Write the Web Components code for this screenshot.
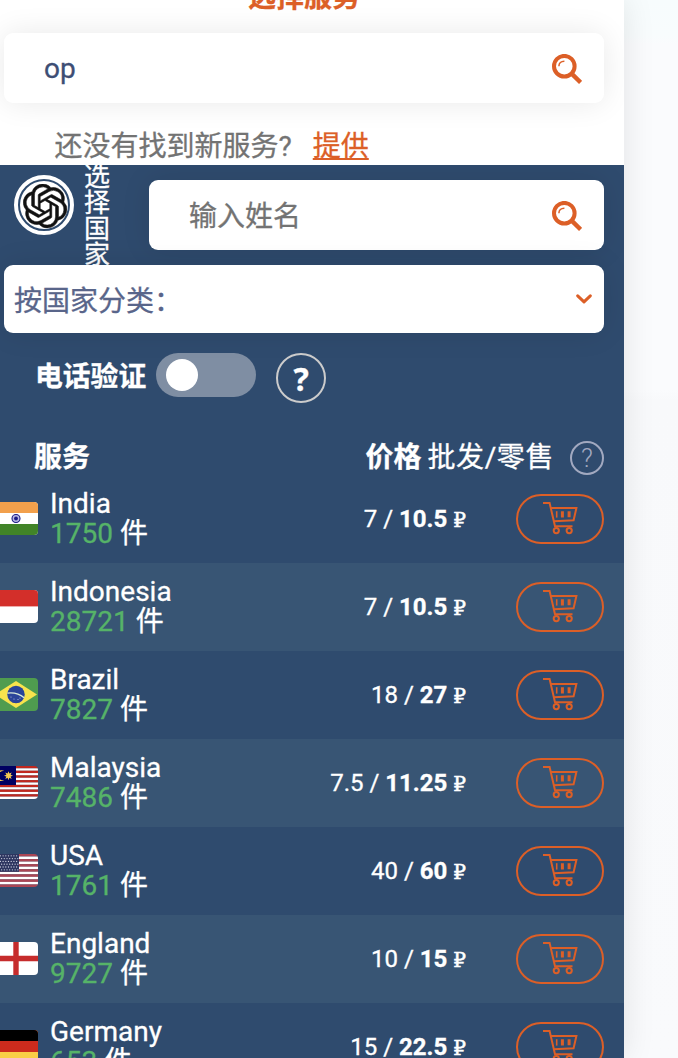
<!DOCTYPE html>
<html lang="zh-CN">
<head>
<meta charset="utf-8">
<title>选择服务</title>
<style>
html,body{margin:0;height:1058px;overflow:hidden}
body{background:linear-gradient(180deg,#f7fcfd 0,#f8fcfd 36px,#fafbfd 44px,#fafbfd 390px,#f8f9fb 400px,#f9fafc 100%);font-family:Roboto,"Noto Sans CJK SC",sans-serif;color:#fff;-webkit-text-stroke:.3px}
</style>
</head>
<body>
<sms-page></sms-page>
<script>
const define=(name,html)=>customElements.define(name,class extends HTMLElement{
  connectedCallback(){
    if(this.shadowRoot)return;
    const t=document.createElement('template');
    t.innerHTML=typeof html==='function'?html(this):html;
    this.attachShadow({mode:'open'}).append(t.content.cloneNode(true));
  }
});

define('search-icon',`<style>:host{display:block;width:30px;height:30px;margin-top:1px}svg{display:block}</style>
<svg width="30" height="30" viewBox="0 0 30 30" fill="none" stroke="#dc5f27"><circle cx="12.3" cy="12.2" r="10.3" stroke-width="4"/><path d="M19.6 19.6 28.6 28.4" stroke-width="4.4"/><path d="M6.9 12.2C6.9 9.2 9 7.1 12.4 7.2" stroke-width="1.5"/></svg>`);

define('search-box',`<style>:host{display:flex;box-sizing:border-box;height:70px;align-items:center;justify-content:space-between;padding:0 22px 0 40px;background:#fff;border-radius:9px;box-shadow:0 0 30px rgba(0,0,0,.09);font-size:28px;line-height:40px;color:#3d4e74}
div{margin-top:var(--text-shift,2px)}
::slotted(*){color:#737373}</style><div><slot></slot></div><search-icon></search-icon>`);

define('country-select',`<style>:host{display:flex;box-sizing:border-box;height:68px;align-items:center;justify-content:space-between;padding:0 12px 0 10px;background:#fff;border-radius:9px;box-shadow:0 0 30px rgba(0,0,0,.09);font-size:28px;line-height:40px;color:#59658a;position:relative}
span{margin-top:5px}</style><span><slot></slot></span>
<svg width="16" height="10" viewBox="0 0 16 10" fill="none" stroke="#dc5f27" stroke-width="3" stroke-linecap="round" stroke-linejoin="round"><path d="M1.7 1.8 8 7.9 14.3 1.8"/></svg>`);

define('service-logo',`<style>:host{display:grid;place-items:center;box-sizing:border-box;width:60px;height:60px;border:4px solid #fff;border-radius:50%}
div{display:grid;place-items:center;width:48px;height:48px;border-radius:50%;background:#fff}svg{filter:blur(.4px);margin:1px 0 0 2px}</style>
<div><svg width="44" height="44" viewBox="0 0 24 24" fill="#111" stroke="#111" stroke-width=".3"><path d="M22.2819 9.8211a5.9847 5.9847 0 0 0-.5157-4.9108 6.0462 6.0462 0 0 0-6.5098-2.9A6.0651 6.0651 0 0 0 4.9807 4.1818a5.9847 5.9847 0 0 0-3.9977 2.9 6.0462 6.0462 0 0 0 .7427 7.0966 5.98 5.98 0 0 0 .511 4.9107 6.051 6.051 0 0 0 6.5146 2.9001A5.9847 5.9847 0 0 0 13.2599 24a6.0557 6.0557 0 0 0 5.7718-4.2058 5.9894 5.9894 0 0 0 3.9977-2.9001 6.0557 6.0557 0 0 0-.7475-7.0729zm-9.022 12.6081a4.4755 4.4755 0 0 1-2.8764-1.0408l.1419-.0804 4.7783-2.7582a.7948.7948 0 0 0 .3927-.6813v-6.7369l2.02 1.1686a.071.071 0 0 1 .038.052v5.5826a4.504 4.504 0 0 1-4.4945 4.4944zm-9.6607-4.1254a4.4708 4.4708 0 0 1-.5346-3.0137l.142.0852 4.783 2.7582a.7712.7712 0 0 0 .7806 0l5.8428-3.3685v2.3324a.0804.0804 0 0 1-.0332.0615L9.74 19.9502a4.4992 4.4992 0 0 1-6.1408-1.6464zM2.3408 7.8956a4.485 4.485 0 0 1 2.3655-1.9728V11.6a.7664.7664 0 0 0 .3879.6765l5.8144 3.3543-2.0201 1.1685a.0757.0757 0 0 1-.071 0l-4.8303-2.7865A4.504 4.504 0 0 1 2.3408 7.872zm16.5963 3.8558L13.1038 8.364 15.1192 7.2a.0757.0757 0 0 1 .071 0l4.8303 2.7913a4.4944 4.4944 0 0 1-.6765 8.1042v-5.6772a.79.79 0 0 0-.407-.667zm2.0107-3.0231l-.142-.0852-4.7735-2.7818a.7759.7759 0 0 0-.7854 0L9.409 9.2297V6.8974a.0662.0662 0 0 1 .0284-.0615l4.8303-2.7866a4.4992 4.4992 0 0 1 6.6802 4.66zM8.3065 12.863l-2.02-1.1638a.0804.0804 0 0 1-.038-.0567V6.0742a4.4992 4.4992 0 0 1 7.3757-3.4537l-.142.0805L8.704 5.459a.7948.7948 0 0 0-.3927.6813zm1.0976-2.3654l2.602-1.4998 2.6069 1.4998v2.9994l-2.5974 1.4997-2.6067-1.4997Z"/></svg></div>`);

define('toggle-switch',`<style>:host{display:flex;box-sizing:border-box;width:100px;height:44px;padding:6px 10px;border-radius:22px;background:#7f8ea3}i{width:32px;height:32px;border-radius:50%;background:#fff}</style><i></i>`);

define('help-badge',`<style>:host{display:grid;place-items:center;box-sizing:border-box;width:50px;height:50px;border:2px solid #ccc;border-radius:50%;font:700 32px/48px "Noto Sans",sans-serif;color:#fff}
:host([light]){width:34px;height:34px;border-color:#a2a9c0;color:#a2a9c0;font:300 26px/30px Roboto,sans-serif;-webkit-text-stroke:0}</style><slot></slot>`);

define('cart-button',`<style>:host{display:flex;box-sizing:border-box;width:88px;height:50px;border:2px solid #dc5f27;border-radius:25px;padding:5px 0 0 25px}</style>
<svg width="36" height="34" viewBox="0 0 36 34" fill="none" stroke="#dc5f27" stroke-width="2"><path d="M0 2H6.6L12 25.3H29.5M7.8 7.1H33.4L30.6 19.2 10.8 20.2"/><path d="M13.7 10.2V16.6" stroke-width="1.6"/><path d="M19.4 10.2V16.4M26.1 10.2V16.2" stroke-width="3"/><circle cx="13.3" cy="29.6" r="2.6"/><circle cx="26.2" cy="29.6" r="2.6"/></svg>`);

const stripes=(n,a,b)=>Array.from({length:n},(_,i)=>`<rect y="${i*33/n}" width="44" height="${33/n+.02}" fill="${i%2?b:a}"/>`).join('');
const stars=()=>{let s='';for(let r=0;r<6;r++)for(let c=0;c<9;c++)s+=`<circle cx="${1+c*2.7+(r%2)*1.2}" cy="${1.8+r*2.8}" r=".65"/>`;return `<g fill="#cdd1df">${s}</g>`};
const FLAGS={
  india:`<rect width="44" height="33" fill="#fff"/><rect width="44" height="11" fill="#f2a04c"/><rect y="22" width="44" height="11" fill="#418428"/><circle cx="22" cy="16.5" r="4" fill="#b9b9e4" stroke="#1c1b86" stroke-width="1.1"/><circle cx="22" cy="16.5" r="1.9" fill="#1c1b86"/>`,
  indonesia:`<rect width="44" height="33" fill="#fff"/><rect width="44" height="16.4" fill="#d32f2a"/>`,
  brazil:`<rect width="44" height="33" fill="#4f9c4f"/><path d="M22 3 43 16.5 22 30 1 16.5Z" fill="#f8e34d"/><circle cx="22" cy="16.5" r="8.7" fill="#2a4499"/><path d="M13.5 15.1Q23 13.8 30.2 19.8" fill="none" stroke="#d9ebda" stroke-width="1.4"/><g fill="#b9c6dc"><circle cx="17" cy="19" r=".6"/><circle cx="20" cy="21" r=".6"/><circle cx="24" cy="21.5" r=".6"/><circle cx="26" cy="20" r=".6"/></g>`,
  malaysia:`${stripes(14,'#c1281f','#fff')}<rect width="22" height="19" fill="#000061"/><path d="M10.2 5A5.4 5.4 0 1 0 10.2 14.4 4.8 4.8 0 1 1 10.2 5Z" fill="#f5c951"/><path d="M14.5 5.2l.9 2.4 2.3-1.1-1.1 2.3 2.4.9-2.4.9 1.1 2.3-2.3-1.1-.9 2.4-.9-2.4-2.3 1.1 1.1-2.3-2.4-.9 2.4-.9-1.1-2.3 2.3 1.1Z" fill="#f5c951"/>`,
  usa:`${stripes(13,'#ab4654','#fff')}<rect width="25" height="17.8" fill="#2d3660"/>${stars()}`,
  england:`<rect width="44" height="33" fill="#fff"/><path d="M0 16.5H44M22 0V33" stroke="#c62c2c" stroke-width="5.4"/>`,
  germany:`<rect width="44" height="33" fill="#f9ce46"/><rect width="44" height="22" fill="#cc2b1d"/><rect width="44" height="11" fill="#000"/>`
};
define('country-flag',e=>`<style>:host{display:block;width:44px;height:33px;border-radius:4px;overflow:hidden}svg{display:block}</style><svg width="44" height="33" viewBox="0 0 44 33">${FLAGS[e.getAttribute('code')]}</svg>`);

define('country-row',e=>`<style>
:host{display:grid;grid-template-columns:44px 1fr auto 88px;align-items:center;height:88px;box-sizing:border-box;padding:0 20px 0 0;overflow:hidden}
:host(:nth-of-type(even)){background:#385574}
country-flag{margin:-1px 0 0 -6px}
.name{margin-left:6px;font-size:28px;line-height:30px;white-space:nowrap}
.name div{height:30px}.count{color:#56b368}
.price{font-size:24px;line-height:30px;margin-right:50px;white-space:nowrap}
.rub{font-family:"Liberation Serif","DejaVu Serif",serif;font-size:20px;-webkit-text-stroke:.5px}
</style>
<country-flag code="${e.getAttribute('code')}"></country-flag>
<div class="name"><div><slot></slot></div><div><span class="count">${e.getAttribute('count')}</span> 件</div></div>
<div class="price">${e.getAttribute('opt')} / <b>${e.getAttribute('retail')}</b> <span class="rub">₽</span></div>
<cart-button></cart-button>`);

define('countries-panel',`<style>
:host{display:block;background:#2f4b6e;height:893px;overflow:hidden}
.top{display:flex;height:100px}
service-logo{margin:10px 0 0 14px}
.vert{width:26px;margin:-1px 0 0 10px;font-size:26px;line-height:26px;height:104px;word-break:break-all}
.top search-box{flex:1;margin:15px 20px 0 39px;--text-shift:4px}
country-select{margin:0 20px 0 4px}
.verify{display:flex;margin:20px 0 0 35px;height:50px;font-size:27.8px;font-weight:700}
.verify span{line-height:47px}
toggle-switch{margin:0 20px 0 10px}
.head{display:flex;justify-content:space-between;height:72px;box-sizing:border-box;padding:34px 20px 0 34px;font-size:28px;line-height:41px}
.head p{margin:0;display:flex;gap:6px}
.head p span{letter-spacing:.6px}
.head help-badge{margin:4px 0 0 10px}
</style>
<div class="top"><service-logo></service-logo><div class="vert">选择国家</div><search-box><span>输入姓名</span></search-box></div>
<country-select>按国家分类：</country-select>
<div class="verify"><span>电话验证</span><toggle-switch></toggle-switch><help-badge>?</help-badge></div>
<div class="head"><b>服务</b><p><b>价格</b><span>批发/零售</span><help-badge light>?</help-badge></p></div>
<slot></slot>`);

define('sms-page',`<style>
:host{display:block;width:624px;height:1058px;background:#fff;overflow:hidden;box-shadow:0 0 30px rgba(0,0,0,.1)}
h1{margin:-22px 0 0;padding-right:16px;font-size:28px;line-height:40px;height:55px;text-align:center;color:#dc5f27;box-sizing:border-box}
search-box.service{margin:0 20px 0 4px}
.hint{display:flex;gap:21px;height:62px;box-sizing:border-box;padding:25px 0 0 54.5px;font-size:28px;line-height:38px;color:#737373}
a{color:#dc5f27;text-decoration:underline;text-decoration-thickness:2px;text-underline-offset:2px}
</style>
<h1>选择服务</h1>
<search-box class="service">op</search-box>
<div class="hint"><span>还没有找到新服务?</span><a>提供</a></div>
<countries-panel>
<country-row code="india" count="1750" opt="7" retail="10.5">India</country-row>
<country-row code="indonesia" count="28721" opt="7" retail="10.5">Indonesia</country-row>
<country-row code="brazil" count="7827" opt="18" retail="27">Brazil</country-row>
<country-row code="malaysia" count="7486" opt="7.5" retail="11.25">Malaysia</country-row>
<country-row code="usa" count="1761" opt="40" retail="60">USA</country-row>
<country-row code="england" count="9727" opt="10" retail="15">England</country-row>
<country-row code="germany" count="653" opt="15" retail="22.5">Germany</country-row>
</countries-panel>`);
</script>
</body>
</html>
